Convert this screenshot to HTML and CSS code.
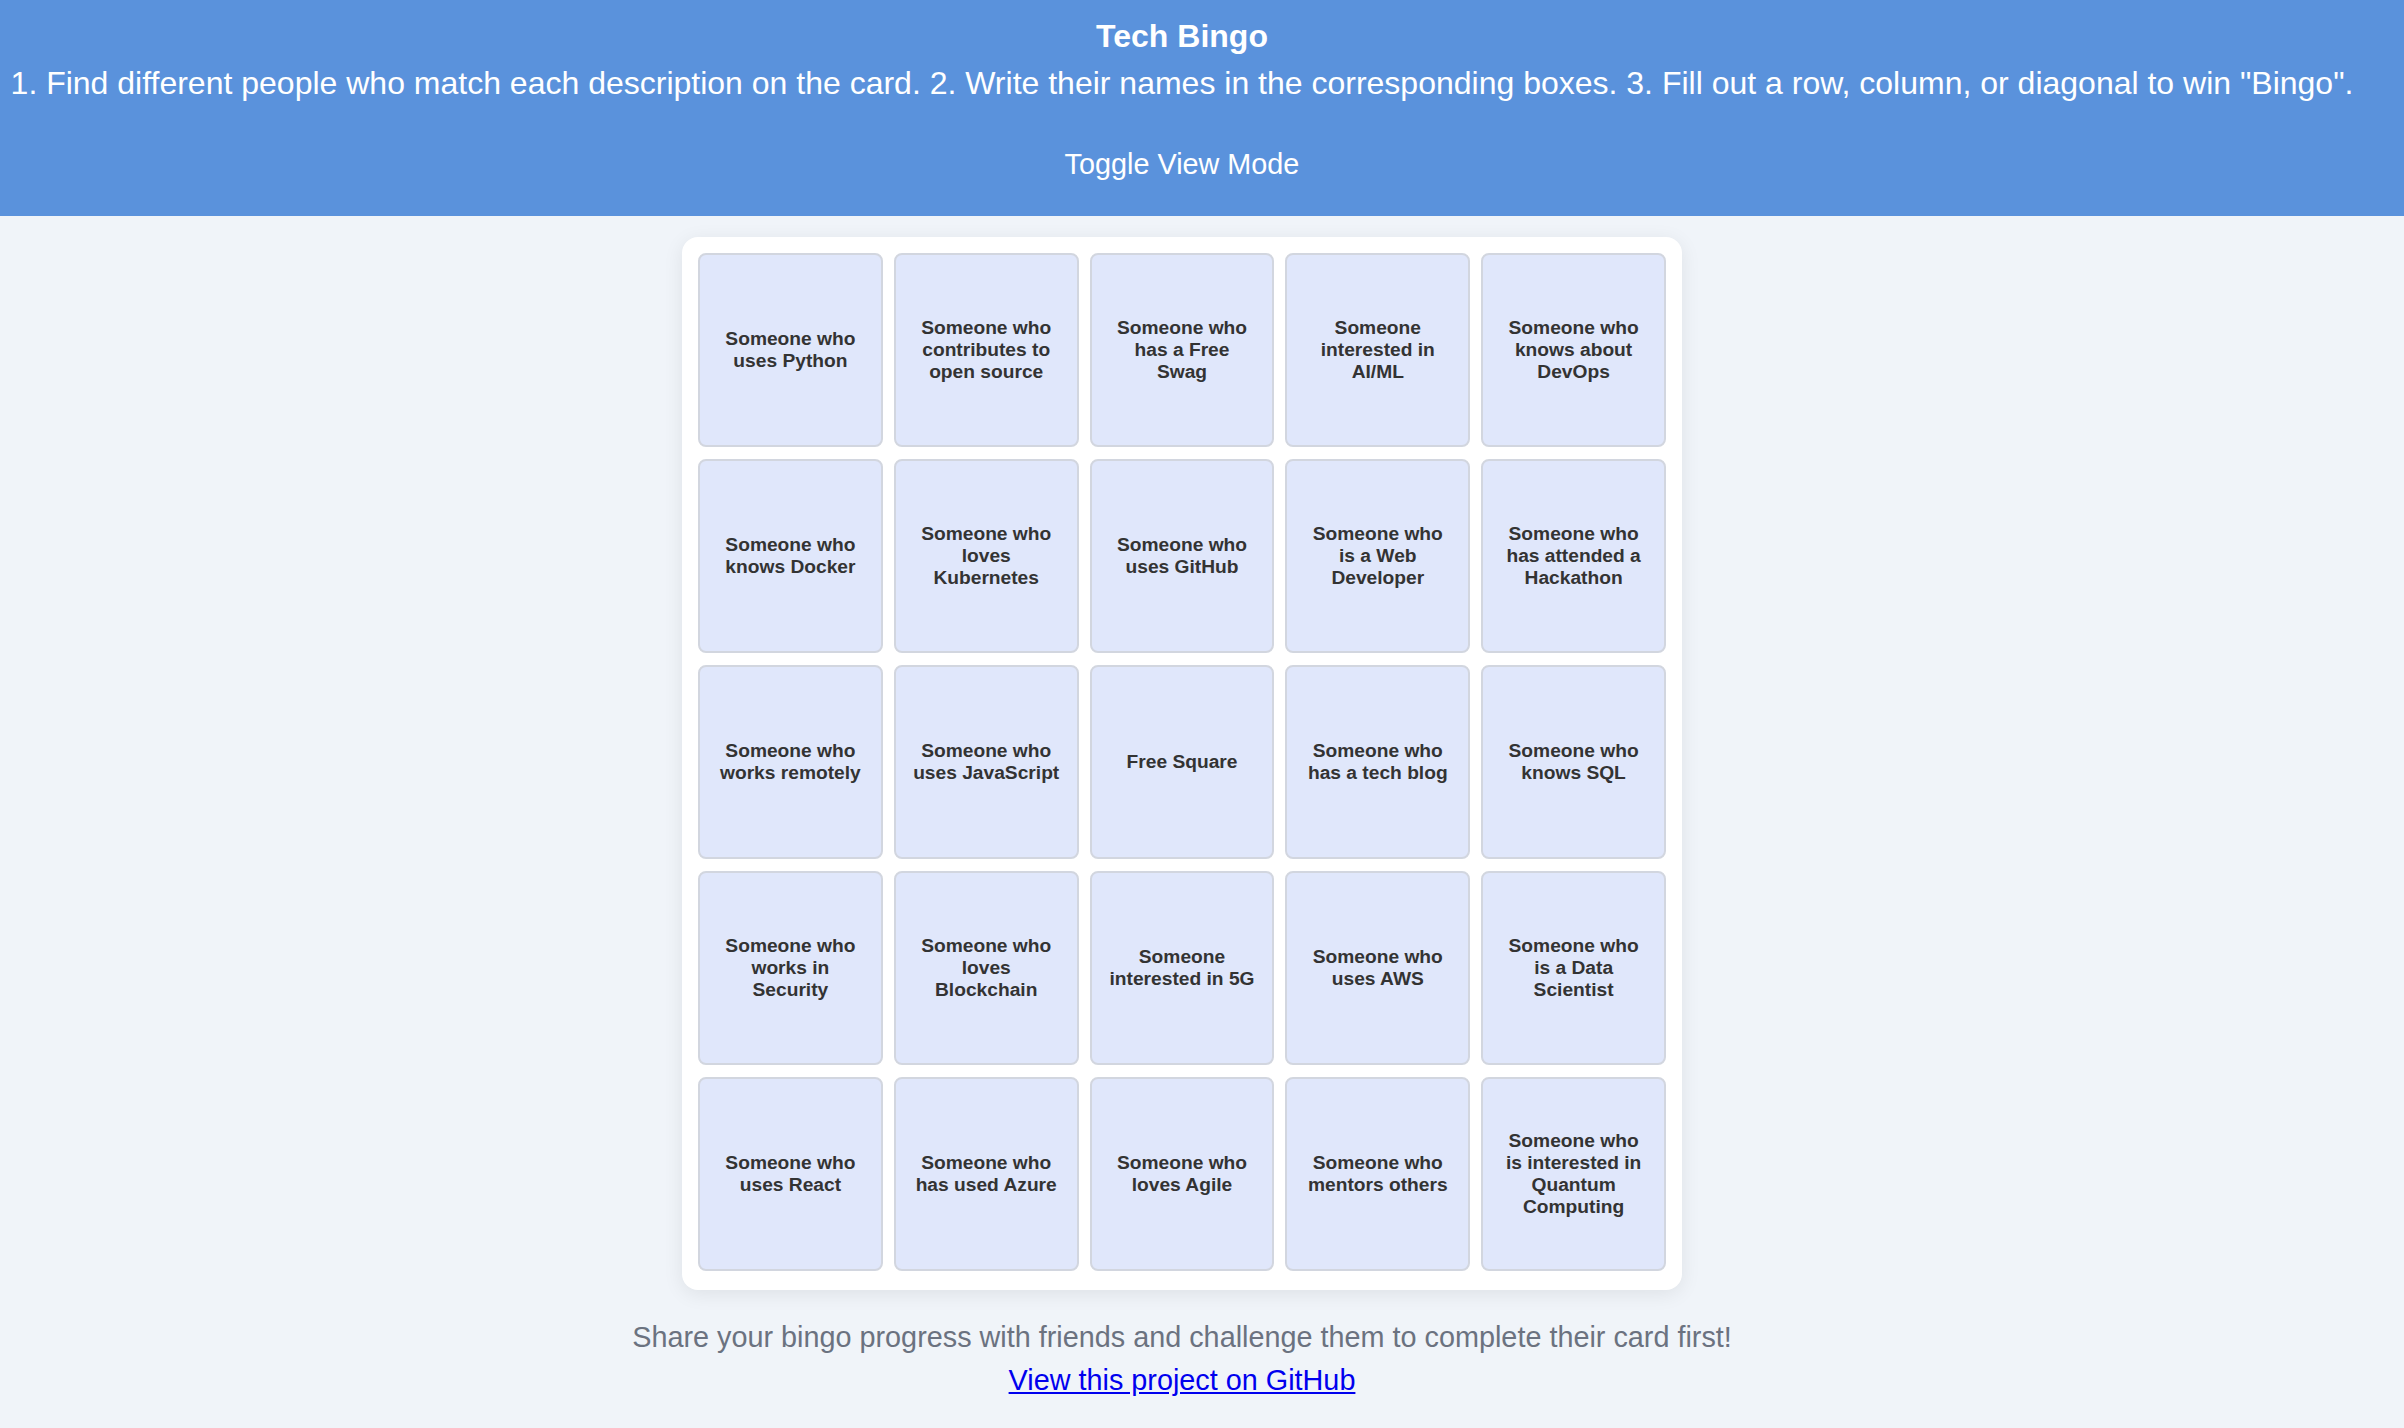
FILE: index.html
```html
<!DOCTYPE html>
<html lang="en">
<head>
<meta charset="utf-8">
<title>Tech Bingo</title>
<link rel="stylesheet" href="styles.css">
</head>
<body>
<header class="top">
  <h1 class="title">Tech Bingo</h1>
  <p class="rules">1. Find different people who match each description on the card. 2. Write their names in the corresponding boxes. 3. Fill out a row, column, or diagonal to win "Bingo".</p>
  <button class="toggle" type="button">Toggle View Mode</button>
</header>
<main class="main">
  <div class="card">
    <div class="cell">Someone who uses Python</div>
    <div class="cell">Someone who contributes to open source</div>
    <div class="cell">Someone who has a Free Swag</div>
    <div class="cell">Someone interested in AI/ML</div>
    <div class="cell">Someone who knows about DevOps</div>
    <div class="cell">Someone who knows Docker</div>
    <div class="cell">Someone who loves Kubernetes</div>
    <div class="cell">Someone who uses GitHub</div>
    <div class="cell">Someone who is a Web Developer</div>
    <div class="cell">Someone who has attended a Hackathon</div>
    <div class="cell">Someone who works remotely</div>
    <div class="cell">Someone who uses JavaScript</div>
    <div class="cell">Free Square</div>
    <div class="cell">Someone who has a tech blog</div>
    <div class="cell">Someone who knows SQL</div>
    <div class="cell">Someone who works in Security</div>
    <div class="cell">Someone who loves Blockchain</div>
    <div class="cell">Someone interested in 5G</div>
    <div class="cell">Someone who uses AWS</div>
    <div class="cell">Someone who is a Data Scientist</div>
    <div class="cell">Someone who uses React</div>
    <div class="cell">Someone who has used Azure</div>
    <div class="cell">Someone who loves Agile</div>
    <div class="cell">Someone who mentors others</div>
    <div class="cell">Someone who is interested in Quantum Computing</div>
  </div>
  <p class="share">Share your bingo progress with friends and challenge them to complete their card first!</p>
  <a class="gh" href="#">View this project on GitHub</a>
</main>
</body>
</html>
```

FILE: styles.css
```css
html, body {
  margin: 0;
  padding: 0;
}
body {
  background: #f0f4f9;
  font-family: "Liberation Sans", Arial, sans-serif;
  color: #333;
  height: 1428px;
  overflow: hidden;
}
.top {
  background: #5a92dc;
  color: #fff;
  text-align: center;
  height: 216px;
  box-sizing: border-box;
  padding: 18px 40px 0 0;
}
.title {
  margin: 0;
  font-size: 32px;
  line-height: 37px;
  font-weight: bold;
}
.rules {
  margin: 10px 0 0;
  font-size: 32px;
  line-height: 37px;
  white-space: nowrap;
}
.toggle {
  display: block;
  margin: 46px auto 0;
  padding: 0;
  border: 0;
  background: transparent;
  color: #fff;
  font-family: inherit;
  font-size: 28.8px;
  line-height: 33px;
}
.main {
  display: flex;
  flex-direction: column;
  align-items: center;
  padding: 21px 40px 0 0;
}
.card {
  width: 1000px;
  box-sizing: border-box;
  background: #fff;
  border-radius: 16px;
  box-shadow: 0 4px 20px rgba(0, 0, 0, 0.08);
  padding: 16px 16px 19px;
  display: grid;
  grid-template-columns: repeat(5, 1fr);
  grid-auto-rows: 194px;
  column-gap: 11px;
  row-gap: 12px;
}
.cell {
  background: #e0e7fb;
  border: 2px solid #d2d6df;
  border-radius: 8px;
  display: flex;
  align-items: center;
  justify-content: center;
  text-align: center;
  font-size: 19.2px;
  font-weight: bold;
  color: #333;
  padding: 0 16px;
  box-sizing: border-box;
}
.share {
  margin: 31px 0 0;
  font-size: 28.8px;
  line-height: 33px;
  color: #6b7280;
}
.gh {
  margin-top: 10px;
  font-size: 28.8px;
  line-height: 33px;
  color: #0000ee;
}
```
